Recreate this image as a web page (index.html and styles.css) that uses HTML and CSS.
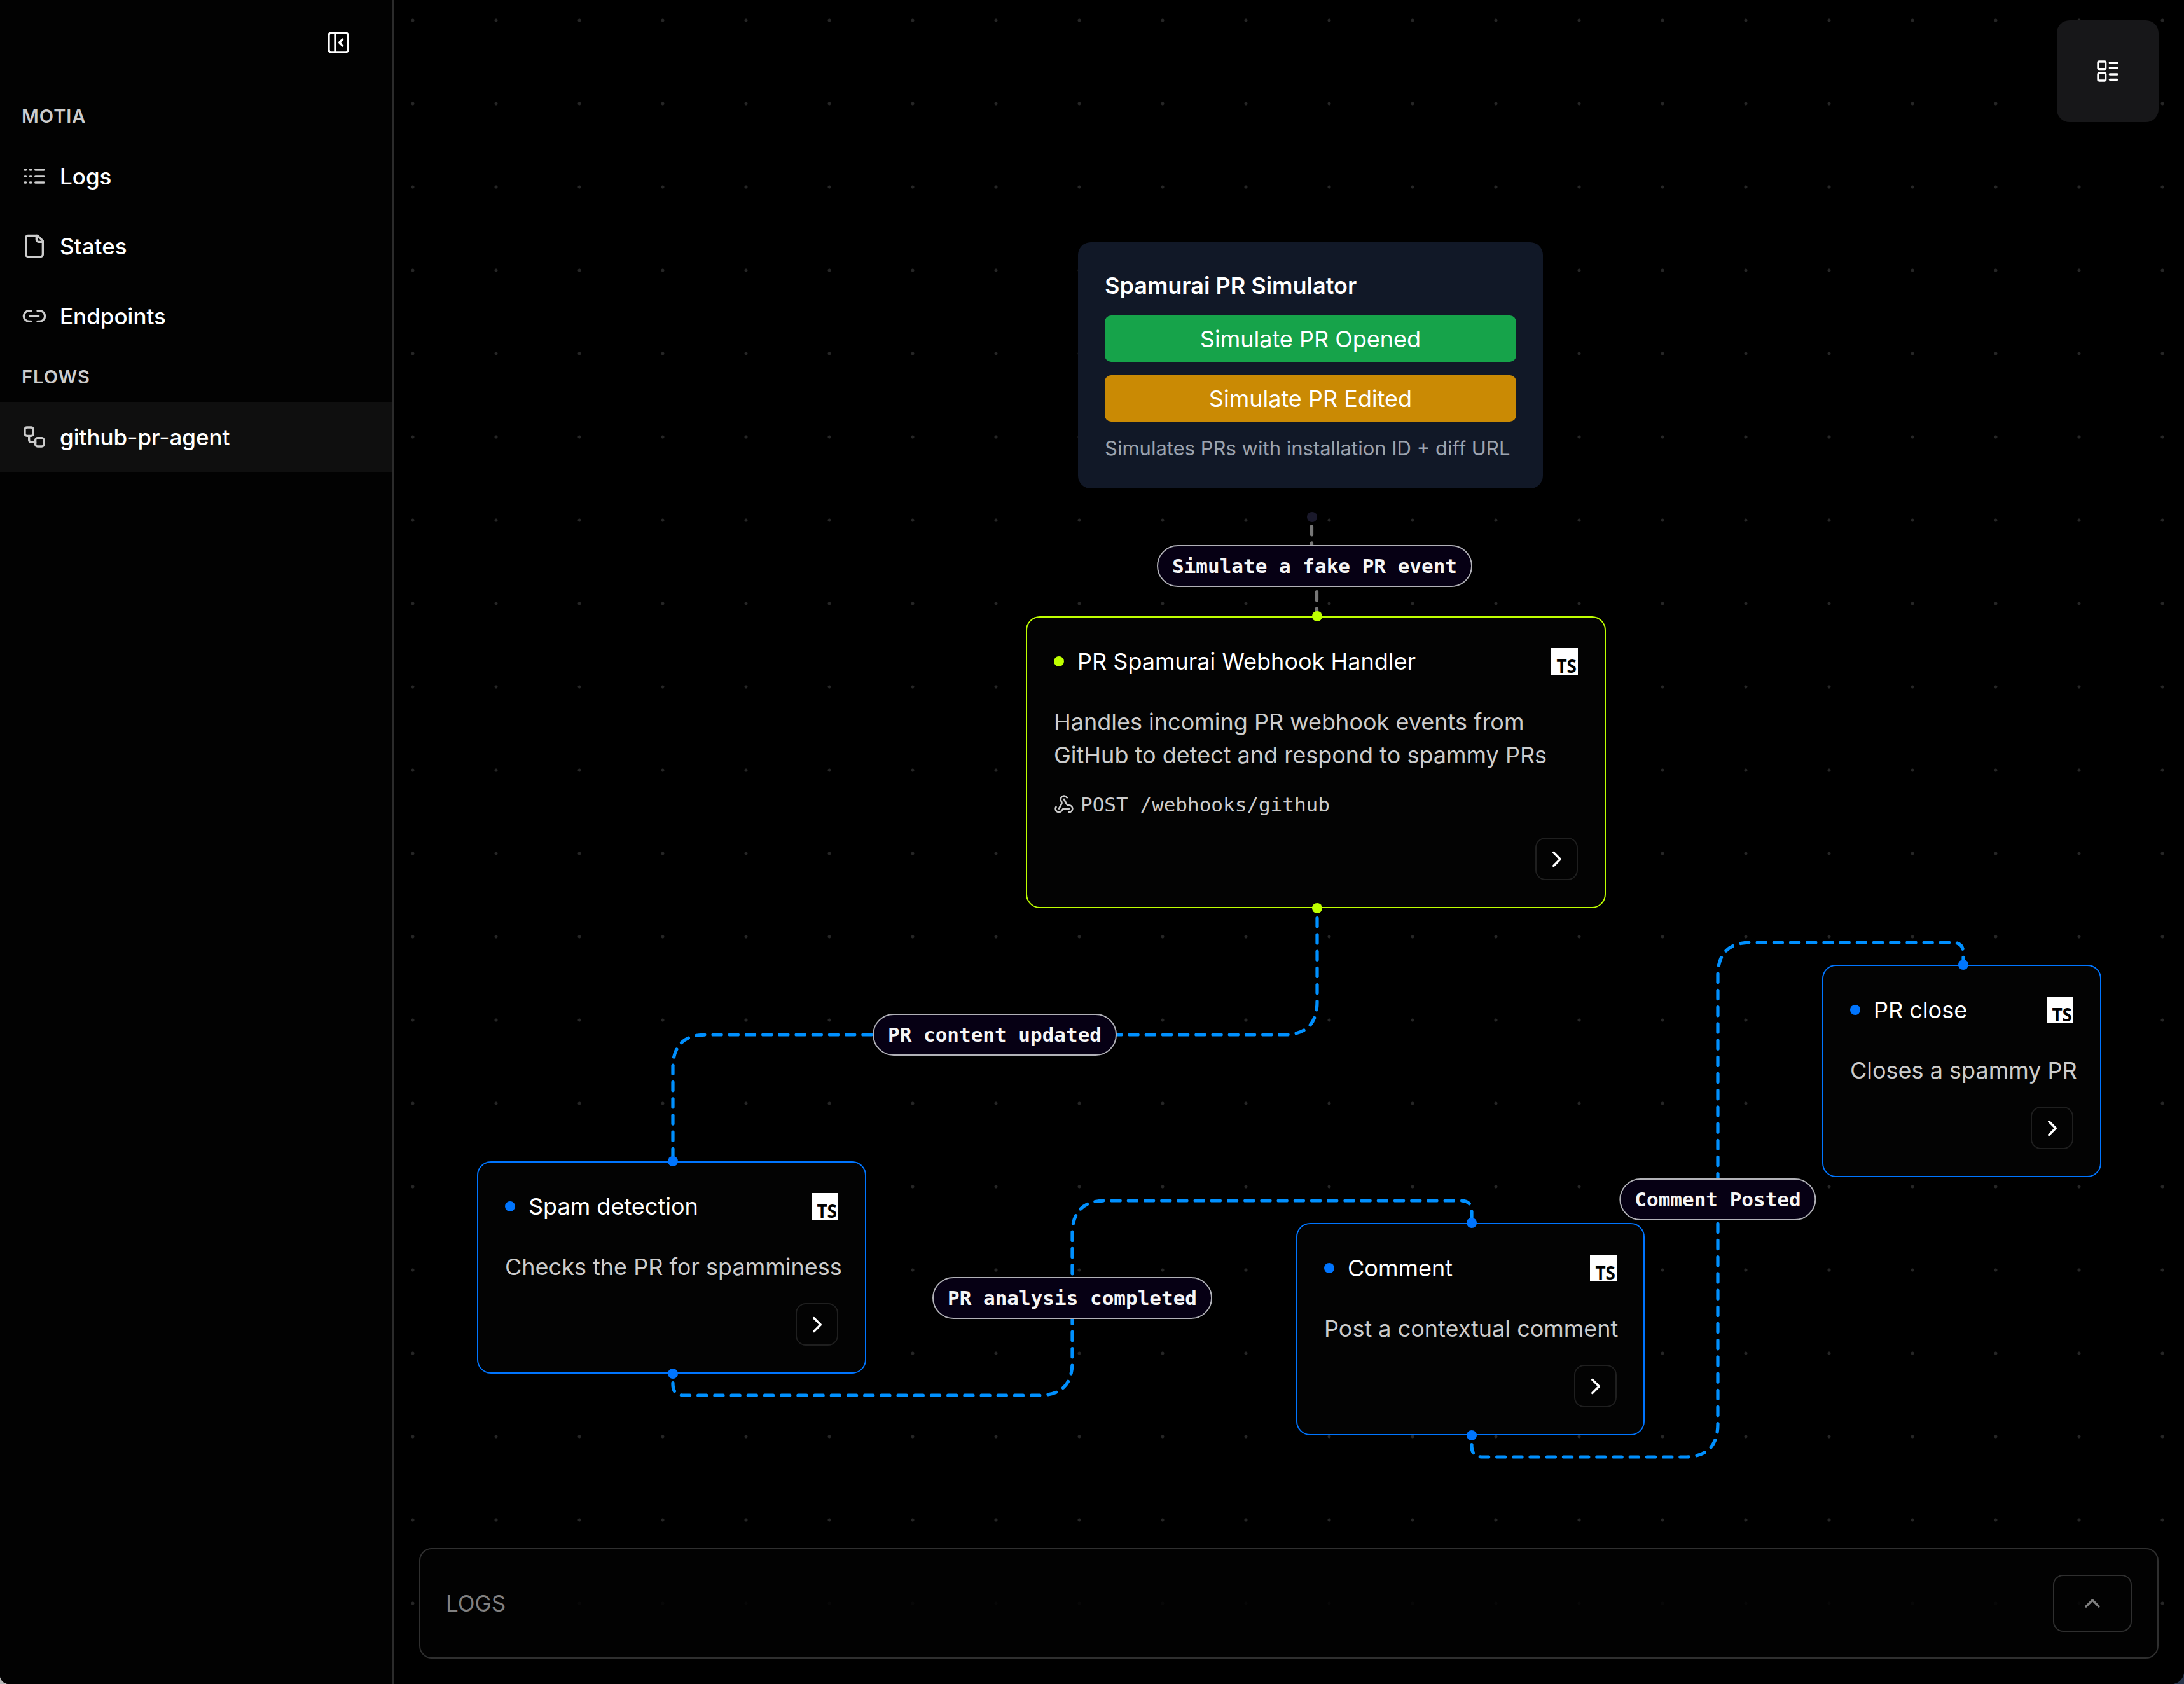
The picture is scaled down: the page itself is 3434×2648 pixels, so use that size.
FILE: index.html
```html
<!DOCTYPE html>
<html lang="en">
<head>
<meta charset="utf-8">
<title>Motia Workbench</title>
<link rel="stylesheet" href="styles.css">
</head>
<body>
<div class="app">
  <aside class="sidebar">
    <div class="sidebar-head">
      <button class="icon-button" type="button" aria-label="Collapse sidebar">
        <svg class="icon" viewBox="0 0 24 24"><rect x="3" y="3" width="18" height="18" rx="2"/><path d="M9 3v18"/><path d="m16 15-3-3 3-3"/></svg>
      </button>
    </div>
    <nav class="nav">
      <h2 class="nav-title">MOTIA</h2>
      <a class="nav-item" href="#logs"><svg class="icon" viewBox="0 0 24 24"><path d="M13 12h8M13 18h8M13 6h8M3 12h1M3 18h1M3 6h1M8 12h1M8 18h1M8 6h1"/></svg>Logs</a>
      <a class="nav-item" href="#states"><svg class="icon" viewBox="0 0 24 24"><path d="M15 2H6a2 2 0 0 0-2 2v16a2 2 0 0 0 2 2h12a2 2 0 0 0 2-2V7Z"/><path d="M14 2v4a2 2 0 0 0 2 2h4"/></svg>States</a>
      <a class="nav-item" href="#endpoints"><svg class="icon" viewBox="0 0 24 24"><path d="M9 17H7A5 5 0 0 1 7 7h2"/><path d="M15 7h2a5 5 0 1 1 0 10h-2"/><path d="M8 12h8"/></svg>Endpoints</a>
      <h2 class="nav-title">FLOWS</h2>
      <a class="nav-item active" href="#github-pr-agent"><svg class="icon" viewBox="0 0 24 24"><rect x="3" y="3" width="8" height="8" rx="2"/><path d="M7 11v4a2 2 0 0 0 2 2h4"/><rect x="13" y="13" width="8" height="8" rx="2"/></svg>github-pr-agent</a>
    </nav>
  </aside>

  <main class="workspace">
    <div class="flow">
      <svg class="edges">
        <path class="edge idle" d="M1443.5 813V865Q1443.5 891 1447.5 891Q1451.5 891 1451.5 917V969"/>
        <path class="edge" d="M1452 1429V1575Q1452 1627 1400 1627H491Q439 1627 439 1679V1826"/>
        <path class="edge" d="M439 2160V2177Q439 2194 456 2194H1015Q1067 2194 1067 2142V1940Q1067 1888 1119 1888H1678Q1695 1888 1695 1905V1923"/>
        <path class="edge" d="M1695 2257V2274Q1695 2291 1712 2291H2030Q2082 2291 2082 2239V1534Q2082 1482 2134 1482H2451Q2468 1482 2468 1499V1517"/>
      </svg>

      <section class="simulator">
        <h3 class="simulator-title">Spamurai PR Simulator</h3>
        <button class="simulate opened" type="button">Simulate PR Opened</button>
        <button class="simulate edited" type="button">Simulate PR Edited</button>
        <p class="simulator-note">Simulates PRs with installation ID + diff URL</p>
        <span class="handle source"></span>
      </section>

      <article class="node api webhook-node">
        <span class="handle target"></span>
        <header class="node-head"><span class="dot"></span><h3 class="node-title">PR Spamurai Webhook Handler</h3><span class="lang">TS</span></header>
        <p class="node-text">Handles incoming PR webhook events from GitHub to detect and respond to spammy PRs</p>
        <p class="route"><svg class="route-icon" viewBox="0 0 24 24"><path d="M18 16.98h-5.99c-1.1 0-1.95.94-2.48 1.9A4 4 0 0 1 2 17c.01-.7.2-1.4.57-2"/><path d="m6 17 3.13-5.78c.53-.97.1-2.18-.5-3.1a4 4 0 1 1 6.89-4.06"/><path d="m12 6 3.13 5.73C15.66 12.7 16.9 13 18 13a4 4 0 0 1 0 8"/></svg>POST /webhooks/github</p>
        <button class="open" type="button" aria-label="Open PR Spamurai Webhook Handler"><svg class="chevron" viewBox="0 0 24 24"><path d="m9 18 6-6-6-6"/></svg></button>
        <span class="handle source"></span>
      </article>

      <article class="node spam-node">
        <span class="handle target"></span>
        <header class="node-head"><span class="dot"></span><h3 class="node-title">Spam detection</h3><span class="lang">TS</span></header>
        <p class="node-text short">Checks the PR for spamminess</p>
        <button class="open" type="button" aria-label="Open Spam detection"><svg class="chevron" viewBox="0 0 24 24"><path d="m9 18 6-6-6-6"/></svg></button>
        <span class="handle source"></span>
      </article>

      <article class="node comment-node">
        <span class="handle target"></span>
        <header class="node-head"><span class="dot"></span><h3 class="node-title">Comment</h3><span class="lang">TS</span></header>
        <p class="node-text short">Post a contextual comment</p>
        <button class="open" type="button" aria-label="Open Comment"><svg class="chevron" viewBox="0 0 24 24"><path d="m9 18 6-6-6-6"/></svg></button>
        <span class="handle source"></span>
      </article>

      <article class="node close-node">
        <span class="handle target"></span>
        <header class="node-head"><span class="dot"></span><h3 class="node-title">PR close</h3><span class="lang">TS</span></header>
        <p class="node-text short">Closes a spammy PR</p>
        <button class="open" type="button" aria-label="Open PR close"><svg class="chevron" viewBox="0 0 24 24"><path d="m9 18 6-6-6-6"/></svg></button>
      </article>

      <span class="edge-label label-simulate">Simulate a fake PR event</span>
      <span class="edge-label label-content">PR content updated</span>
      <span class="edge-label label-analysis">PR analysis completed</span>
      <span class="edge-label label-posted">Comment Posted</span>
    </div>

    <button class="layout-button" type="button" aria-label="Arrange layout">
      <svg class="icon" viewBox="0 0 24 24"><rect x="3" y="3" width="7" height="7" rx="1"/><rect x="3" y="14" width="7" height="7" rx="1"/><path d="M14 4h7M14 9h7M14 15h7M14 20h7"/></svg>
    </button>

    <section class="logs">
      <h2 class="logs-title">LOGS</h2>
      <button class="logs-toggle" type="button" aria-label="Expand logs"><svg class="icon" viewBox="0 0 24 24"><path d="m18 15-6-6-6 6"/></svg></button>
    </section>
  </main>
</div>
</body>
</html>
```
FILE: styles.css
```css
* { box-sizing: border-box; }

body {
  margin: 0;
  background: linear-gradient(to right, #b8b8b8 50%, #27344a 50%);
  color: #fff;
  font-family: Inter, "Liberation Sans", sans-serif;
}

h2, h3, p { margin: 0; font-weight: 400; }

button {
  margin: 0;
  padding: 0;
  border: 0;
  background: none;
  color: inherit;
  font: inherit;
  cursor: pointer;
}

svg { fill: none; stroke: currentColor; stroke-width: 2; stroke-linecap: round; stroke-linejoin: round; }

.icon { display: block; flex: none; width: 40px; height: 40px; }

.app {
  display: flex;
  min-height: 100vh;
  overflow: hidden;
  border-radius: 0 0 20px 14px;
  background: #000;
}

/* Sidebar */
.sidebar {
  flex: none;
  width: 619px;
  background: #020202;
  border-right: 2px solid #2b2b2b;
}
.sidebar-head { display: flex; justify-content: flex-end; height: 142px; padding: 47px 65px 0 0; }
.icon-button { height: 40px; }
.nav { display: flex; flex-direction: column; }
.nav-title {
  height: 80px;
  padding: 0 34px;
  color: #ccc;
  font-size: 29px;
  font-weight: 600;
  line-height: 82px;
  letter-spacing: 1px;
}
.nav-item {
  display: flex;
  align-items: center;
  gap: 20px;
  height: 110px;
  padding: 0 34px;
  color: #fff;
  font-size: 35px;
  font-weight: 500;
  text-decoration: none;
}
.nav-item .icon { color: #ccc; }
.nav-item.active { background: #0f0f0f; }

/* Workspace */
.workspace {
  position: relative;
  display: flex;
  flex: 1;
  flex-direction: column;
  min-width: 0;
  padding: 32px 40px 40px;
  overflow: hidden;
  background: radial-gradient(circle at 30px 32px, #262626 2px, transparent 3px) 0 0 / 131px 131px #000;
}
.layout-button {
  position: relative;
  display: grid;
  place-items: center;
  align-self: flex-end;
  width: 160px;
  height: 160px;
  border-radius: 20px;
  background: #171719;
}
.logs {
  position: relative;
  display: flex;
  align-items: center;
  justify-content: space-between;
  margin-top: auto;
  padding: 40px;
  border: 2px solid #2f2f2f;
  border-radius: 20px;
  background: rgb(2 2 2 / 85%);
  color: #808080;
}
.logs-title { font-size: 35px; line-height: 50px; }
.logs-toggle {
  display: grid;
  place-items: center;
  width: 124px;
  height: 90px;
  border: 2px solid #2f2f2f;
  border-radius: 16px;
}

/* Flow canvas */
.flow { position: absolute; inset: 0; font-size: 36px; line-height: 52px; }
.edges { position: absolute; inset: 0; width: 100%; height: 100%; }
.edge { stroke: #0090ff; stroke-width: 5.24; stroke-dasharray: 13.1; stroke-dashoffset: 11.5; }
.edge.idle { stroke: #777; }

.handle {
  position: absolute;
  left: 50%;
  width: 16px;
  height: 16px;
  margin-left: -6px;
  border-radius: 50%;
  background: var(--accent);
}
.handle.target { top: -10px; }
.handle.source { bottom: -10px; }

.simulator {
  --accent: #1a192b;
  position: absolute;
  left: 1076px;
  top: 381px;
  display: flex;
  flex-direction: column;
  gap: 21px;
  width: 731px;
  padding: 42px;
  border-radius: 20px;
  background: #111827;
}
.simulator .handle.source { bottom: -53px; }
.simulator-title { font-size: 36px; font-weight: 600; }
.simulate { height: 73px; border-radius: 10px; }
.opened { background: #16a34a; }
.edited { background: #ca8a04; }
.simulator-note { color: #9ca3af; font-size: 31px; line-height: 42px; white-space: nowrap; }

.node {
  --accent: #0075ff;
  position: absolute;
  display: flex;
  flex-direction: column;
  gap: 31px;
  padding: 43px 42px 42px;
  border: 2px solid var(--accent);
  border-radius: 22px;
  background: #030303;
}
.node.api { --accent: #beff00; }
.node-head { display: flex; align-items: center; gap: 21px; margin-bottom: 12px; }
.dot { width: 16px; height: 16px; border-radius: 50%; background: var(--accent); }
.node-title { flex: 1; font-size: 36px; }
.node-text { color: #ccc; }
.node-text.short { white-space: nowrap; }
.lang {
  display: flex;
  align-items: flex-end;
  justify-content: flex-end;
  width: 42px;
  height: 42px;
  padding-right: 2px;
  background: #fff;
  color: #000;
  font: 700 28px/28px "Noto Sans", sans-serif;
}
.route {
  display: flex;
  align-items: center;
  gap: 10px;
  color: #ccc;
  font: 31px/42px "DejaVu Sans Mono", monospace;
}
.route-icon { width: 32px; height: 32px; }
.open {
  display: grid;
  place-items: center;
  align-self: flex-end;
  width: 67px;
  height: 67px;
  border: 2px solid #1f1f1f;
  border-radius: 16px;
}
.chevron { width: 42px; height: 42px; }

.webhook-node { left: 994px; top: 969px; width: 912px; }
.spam-node { left: 131px; top: 1826px; width: 612px; }
.comment-node { left: 1419px; top: 1923px; width: 548px; }
.close-node { left: 2246px; top: 1517px; width: 439px; }

.edge-label {
  position: absolute;
  padding: 10px 22px;
  border: 2px solid #b1b1b7;
  border-radius: 34px;
  background: #060014;
  color: #f5f5f5;
  font: 700 31px/42px "DejaVu Sans Mono", monospace;
  white-space: nowrap;
  transform: translate(-50%, -50%);
}
.label-simulate { left: 1448px; top: 890px; }
.label-content { left: 945px; top: 1627px; }
.label-analysis { left: 1067px; top: 2041px; }
.label-posted { left: 2082px; top: 1886px; }
```
